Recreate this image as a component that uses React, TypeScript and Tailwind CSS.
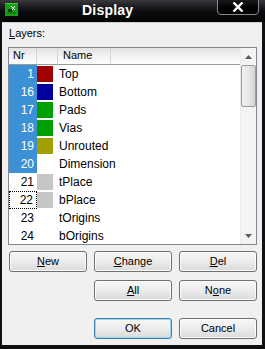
import React from "react";

const rows = [
  { nr: 1, color: "#a00000", name: "Top", sel: true },
  { nr: 16, color: "#00009c", name: "Bottom", sel: true },
  { nr: 17, color: "#00a000", name: "Pads", sel: true },
  { nr: 18, color: "#00a000", name: "Vias", sel: true },
  { nr: 19, color: "#a0a000", name: "Unrouted", sel: true },
  { nr: 20, color: "", name: "Dimension", sel: true },
  { nr: 21, color: "#c6c6c6", name: "tPlace", sel: false },
  { nr: 22, color: "#c6c6c6", name: "bPlace", sel: false, focus: true },
  { nr: 23, color: "", name: "tOrigins", sel: false },
  { nr: 24, color: "", name: "bOrigins", sel: false },
];

function Btn({ children, primary }: { children: React.ReactNode; primary?: boolean }) {
  return (
    <button
      className={
        "h-[21px] w-[78px] rounded-[3px] border text-[11px] text-black leading-none bg-gradient-to-b from-[#f7f7f7] via-[#ececec] to-[#dadada] " +
        (primary
          ? "border-[#3c7fb1] shadow-[inset_0_0_0_1px_#9fd4f0]"
          : "border-[#707070] shadow-[inset_0_0_0_1px_#fbfbfb]")
      }
    >
      {children}
    </button>
  );
}

function AppIcon() {
  return (
    <svg width="13" height="13" viewBox="0 0 13 13">
      <rect width="13" height="13" fill="#12a212" />
      <rect x="0" y="0" width="13" height="1" fill="#3ccc3c" />
      <path d="M3 6h4v3H3z" fill="#1a2a1a" />
      <path d="M6 3l4 4M10 3l-3 4" stroke="#e8ffe8" strokeWidth="1" />
      <path d="M2 10h9" stroke="#0a5a0a" strokeWidth="1" />
    </svg>
  );
}

export default function App() {
  return (
    <div className="w-[265px] h-[349px] bg-[#101012] flex flex-col font-['Liberation_Sans',Arial,sans-serif] select-none overflow-hidden">
      {/* title bar */}
      <div className="h-[22px] flex items-start bg-gradient-to-b from-[#3a3a3e] via-[#0c0c0e] to-[#050506]">
        <div className="ml-[5px] mt-[3px]">
          <AppIcon />
        </div>
        <div className="flex-1 pl-[64px] text-white font-bold text-[14px] leading-[20px] tracking-[0.2px]">Display</div>
        <div className="mr-[6px] w-[42px] h-[16px] -mt-[1px] border border-[#8a8a90] rounded-b-[4px] bg-gradient-to-b from-[#1a1a1e] to-[#000] flex items-center justify-center">
          <svg width="12" height="10" viewBox="0 0 12 10">
            <path d="M1.5 0.5l9 9M10.5 0.5l-9 9" stroke="#fff" strokeWidth="2.4" />
          </svg>
        </div>
      </div>

      {/* body */}
      <div className="flex-1 ml-[2px] mr-[3px] mb-[4px] bg-[#f0f0f0] border-t border-[#cfcfcf] pl-[6px] pr-[5px] flex flex-col">
        <div className="mt-[3px] h-[14px] text-[11px] leading-[14px] text-black pl-[1px]">
          <span className="underline">L</span>ayers:
        </div>

        {/* list */}
        <div className="mt-[7px] h-[198px] border border-[#828790] bg-white flex overflow-hidden">
          <div className="flex-1 flex flex-col overflow-hidden">
            <div className="h-[17px] shrink-0 flex text-[11px] leading-[15px] text-black bg-gradient-to-b from-[#e2e2e2] via-[#f3f3f3] to-[#fcfcfc] border-b border-[#9a9a9a]">
              <div className="w-[28px] pl-[4px] border-r border-[#d5d5d5]">Nr</div>
              <div className="w-[21px] border-r border-[#d5d5d5]" />
              <div className="w-[53px] pl-[5px] border-r border-[#d5d5d5]">Name</div>
              <div className="flex-1" />
            </div>
            {rows.map((r) => (
              <div key={r.nr} className="h-[18px] shrink-0 flex text-[12px] leading-[18px]">
                <div
                  className={
                    "w-[28px] text-right pr-[3px] " +
                    (r.sel ? "bg-[#3c91d6] text-white" : "text-black") +
                    (r.focus ? " border border-dotted border-black leading-[16px] pr-[2px]" : "")
                  }
                >
                  {r.nr}
                </div>
                <div className="w-[21px] pt-[1px]">
                  {r.color ? <div className="w-[16px] h-[16px]" style={{ backgroundColor: r.color }} /> : null}
                </div>
                <div className="flex-1 pl-[1px] text-black">{r.name}</div>
              </div>
            ))}
          </div>

          {/* scrollbar */}
          <div className="w-[16px] bg-[#f4f4f4] border-l border-[#ececec] flex flex-col items-center">
            <div className="h-[17px] w-full flex items-center justify-center">
              <svg width="7" height="4" viewBox="0 0 7 4">
                <path d="M0 4L3.5 0L7 4z" fill="#5a5a5a" />
              </svg>
            </div>
            <div className="w-[15px] h-[42px] rounded-[2px] border border-[#9a9a9a] bg-gradient-to-r from-[#f2f2f2] via-[#e6e6e6] to-[#d4d4d4]" />
            <div className="flex-1" />
            <div className="h-[17px] w-full flex items-center justify-center">
              <svg width="7" height="4" viewBox="0 0 7 4">
                <path d="M0 0L3.5 4L7 0z" fill="#5a5a5a" />
              </svg>
            </div>
          </div>
        </div>

        {/* buttons */}
        <div className="mt-[6px] ml-[1px] flex gap-[7px]">
          <Btn>
            <span className="underline">N</span>ew
          </Btn>
          <Btn>
            <span className="underline">C</span>hange
          </Btn>
          <Btn>
            <span className="underline">D</span>el
          </Btn>
        </div>
        <div className="mt-[8px] ml-[1px] flex gap-[7px]">
          <div className="w-[78px]" />
          <Btn>
            <span className="underline">A</span>ll
          </Btn>
          <Btn>
            N<span className="underline">o</span>ne
          </Btn>
        </div>
        <div className="mt-[17px] ml-[1px] flex gap-[7px]">
          <div className="w-[78px]" />
          <Btn primary>OK</Btn>
          <Btn>Cancel</Btn>
        </div>
      </div>
    </div>
  );
}
